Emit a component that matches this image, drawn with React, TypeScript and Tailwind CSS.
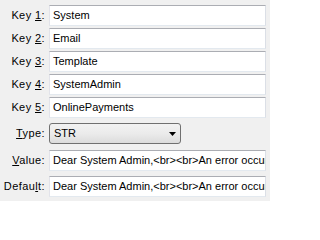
import React from "react";

const inputCls =
  "h-[21px] w-[217px] bg-white border border-t-[#abadb3] border-l-[#e2e3ea] border-r-[#dbdfe6] border-b-[#e3e9ef] pl-[3px] flex items-center overflow-hidden whitespace-nowrap text-black";

function Label({ pre, u, post }: { pre: string; u: string; post: string }) {
  return (
    <div className="w-[47px] pr-[2px] text-right whitespace-nowrap text-black tracking-[0.4px]">
      {pre}
      <span className="underline underline-offset-[1px]">{u}</span>
      {post}
    </div>
  );
}

export default function App() {
  const keys = ["System", "Email", "Template", "SystemAdmin", "OnlinePayments"];
  return (
    <div
      className="w-[270px] h-[201px] bg-[#f0f0f0] pt-[5px] text-[11px] leading-[13px] overflow-hidden"
      style={{ fontFamily: '"Liberation Sans", Arial, sans-serif' }}
    >
      <div className="flex flex-col gap-[2px]">
        {keys.map((k, i) => (
          <div key={k} className="flex items-center gap-[2px]">
            <Label pre="Key " u={String(i + 1)} post=":" />
            <div className={inputCls}>{k}</div>
          </div>
        ))}
      </div>
      <div className="flex items-center gap-[2px] mt-[5px]">
        <Label pre="" u="T" post="ype:" />
        <div className="h-[21px] w-[132px] rounded-[3px] border border-[#707070] bg-gradient-to-b from-[#f2f2f2] via-[#ebebeb] to-[#dcdcdc] flex items-center justify-between pl-[4px] pr-[4px] text-black">
          <span>STR</span>
          <svg width="7" height="4" viewBox="0 0 7 4">
            <path d="M0 0H7L3.5 4Z" fill="#000" />
          </svg>
        </div>
      </div>
      <div className="flex items-center gap-[2px] mt-[6px]">
        <Label pre="" u="V" post="alue:" />
        <div className={inputCls}>Dear System Admin,&lt;br&gt;&lt;br&gt;An error occurred</div>
      </div>
      <div className="flex items-center gap-[2px] mt-[5px]">
        <Label pre="Defau" u="l" post="t:" />
        <div className={inputCls}>Dear System Admin,&lt;br&gt;&lt;br&gt;An error occurred</div>
      </div>
    </div>
  );
}
